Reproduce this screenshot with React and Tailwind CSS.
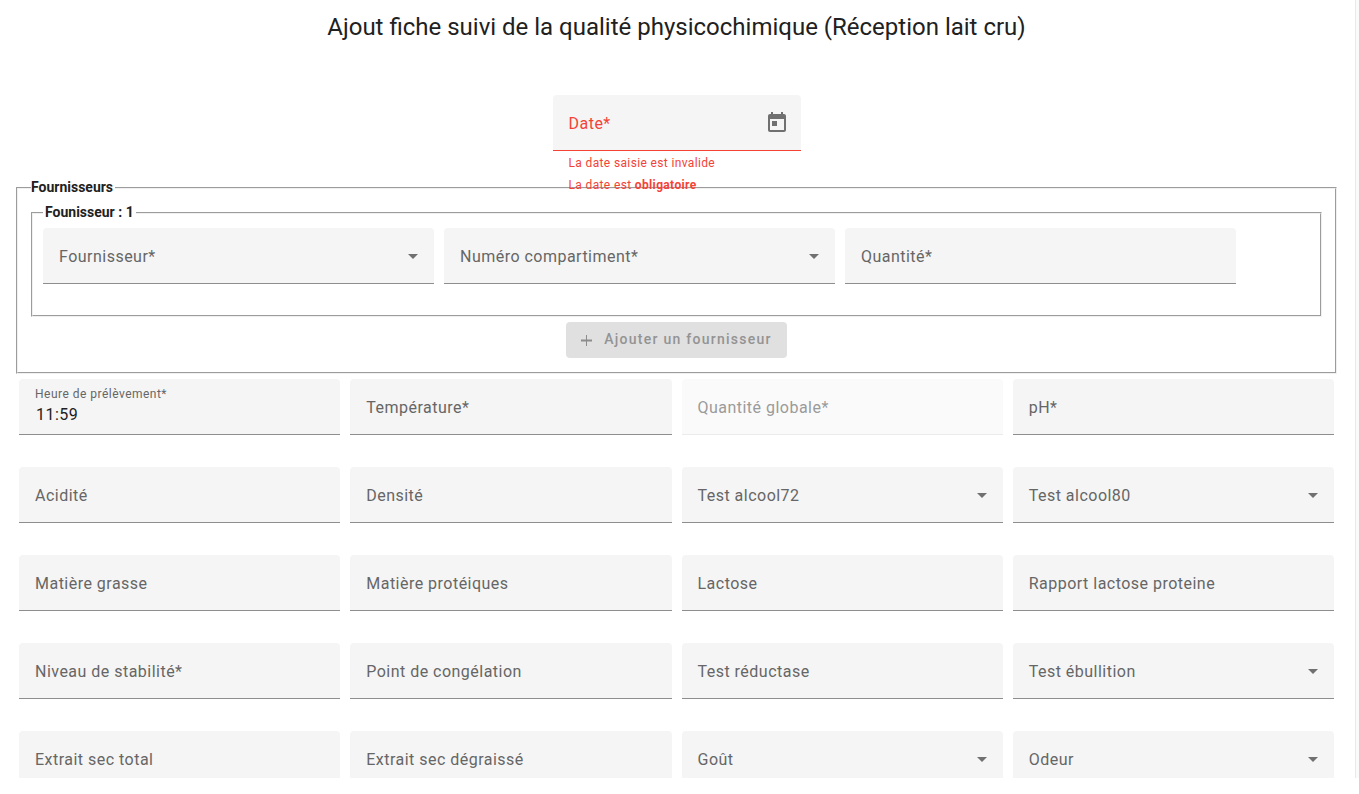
import { useState } from 'react';

const FIELDS = [
  { id: 'heure', label: 'Heure de prélèvement', required: true, value: '11:59' },
  { id: 'temperature', label: 'Température', required: true },
  { id: 'quantiteGlobale', label: 'Quantité globale', required: true, disabled: true },
  { id: 'ph', label: 'pH', required: true },
  { id: 'acidite', label: 'Acidité' },
  { id: 'densite', label: 'Densité' },
  { id: 'alcool72', label: 'Test alcool72', select: true },
  { id: 'alcool80', label: 'Test alcool80', select: true },
  { id: 'matiereGrasse', label: 'Matière grasse' },
  { id: 'matiereProteique', label: 'Matière protéiques' },
  { id: 'lactose', label: 'Lactose' },
  { id: 'rapport', label: 'Rapport lactose proteine' },
  { id: 'stabilite', label: 'Niveau de stabilité', required: true },
  { id: 'congelation', label: 'Point de congélation' },
  { id: 'reductase', label: 'Test réductase' },
  { id: 'ebullition', label: 'Test ébullition', select: true },
  { id: 'extraitTotal', label: 'Extrait sec total' },
  { id: 'extraitDegraisse', label: 'Extrait sec dégraissé' },
  { id: 'gout', label: 'Goût', select: true },
  { id: 'odeur', label: 'Odeur', select: true },
];

function Field({ id, label, required, disabled, select, invalid, value: initial = '', children }) {
  const [value, setValue] = useState(initial);

  let box = 'bg-[#f5f5f5] border-[#8e8e8e]';
  let color = 'text-[#666666]';
  if (disabled) {
    box = 'bg-[#fafafa] border-[#ebebeb]';
    color = 'text-[#9b9b9b]';
  }
  if (invalid) {
    box = 'bg-[#f5f5f5] border-[#f44336]';
    color = 'text-[#f44336]';
  }

  return (
    <div className={`relative flex h-14 min-w-0 rounded-t border-b tracking-[0.03em] ${box}`}>
      <label
        htmlFor={id}
        className={`pointer-events-none absolute left-4 ${color} ${value ? 'top-[5px] text-xs leading-5' : 'top-[17px] text-base leading-6'}`}
      >
        {label}{required && '*'}
      </label>
      {select ? (
        <>
          <select
            id={id}
            value={value}
            onChange={(e) => setValue(e.target.value)}
            className="w-full appearance-none bg-transparent px-4 text-base focus:outline-none"
          >
            <option value=""></option>
          </select>
          <svg className="pointer-events-none absolute right-4 top-[26px]" width="10" height="5" viewBox="0 0 10 5" fill="#707070">
            <path d="M0 0h10L5 5z" />
          </svg>
        </>
      ) : (
        <input
          id={id}
          type="text"
          value={value}
          disabled={disabled}
          onChange={(e) => setValue(e.target.value)}
          className="w-full min-w-0 bg-transparent px-[17px] pt-4 text-base text-[#212121] focus:outline-none"
        />
      )}
      {children}
    </div>
  );
}

function App() {
  return (
    <div className="h-screen bg-white pb-4 font-['Roboto',sans-serif] text-[#212121]">
      <div className="flex h-full overflow-hidden">
        <main className="min-w-0 flex-1 pl-4 pr-[18px] pt-[11px]">
          <h1 className="mb-[52px] text-center text-2xl leading-8">
            Ajout fiche suivi de la qualité physicochimique (Réception lait cru)
          </h1>

          <div className="mx-auto w-[248px]">
            <Field id="date" label="Date" required invalid>
              <button type="button" aria-label="Ouvrir le calendrier" className="shrink-0 pr-3">
                <svg width="24" height="24" viewBox="0 0 24 24" fill="#707070">
                  <path d="M19 3h-1V1h-2v2H8V1H6v2H5c-1.11 0-1.99.9-1.99 2L3 19c0 1.1.89 2 2 2h14c1.1 0 2-.9 2-2V5c0-1.1-.9-2-2-2zm0 16H5V8h14v11zM7 10h5v5H7v-5z" />
                </svg>
              </button>
            </Field>
            <div className="h-[27px] px-4 text-xs leading-[22px] tracking-[0.03em] text-[#f44336]">
              <p className="pt-px">La date saisie est invalide</p>
              <p>La date est <strong>obligatoire</strong></p>
            </div>
          </div>

          <fieldset className="border-2 border-[#f0f0f0] px-[13px] pb-[14px] [border-style:groove]">
            <legend className="pb-[2px] pr-[2px] text-sm font-bold leading-[18px]">Fournisseurs</legend>
            <fieldset className="mt-[5px] border-2 border-[#f0f0f0] px-[10px] pb-[31px] [border-style:groove]">
              <legend className="px-[2px] pb-[2px] text-sm font-bold leading-[18px]">Founisseur : 1</legend>
              <div className="grid grid-cols-3 gap-[10px] pr-[74px] pt-[5px]">
                <Field id="fournisseur" label="Fournisseur" required select />
                <Field id="compartiment" label="Numéro compartiment" required select />
                <Field id="quantite" label="Quantité" required />
              </div>
            </fieldset>
            <button
              type="button"
              disabled
              className="mx-auto mt-[5px] flex h-9 items-center gap-3 rounded bg-[#e0e0e0] px-[15px] pb-[2px] text-sm font-medium tracking-[0.09em] text-[#939393]"
            >
              <svg className="mt-[2px]" width="11" height="11" viewBox="0 0 11 11" fill="none" stroke="#8c8c8c">
                <path d="M0 5.5h11" strokeWidth="2" />
                <path d="M5.5 0v11" strokeWidth="1" />
              </svg>
              Ajouter un fournisseur
            </button>
          </fieldset>

          <div className="mt-[5px] grid grid-cols-4 gap-x-[10px] gap-y-8 px-[3px]">
            {FIELDS.map((field) => (
              <Field key={field.id} {...field} />
            ))}
          </div>
        </main>
        <div className="w-1 shrink-0 border-l border-[#e8e8e8] bg-[#fafafa]" />
      </div>
    </div>
  );
}

export default App;
